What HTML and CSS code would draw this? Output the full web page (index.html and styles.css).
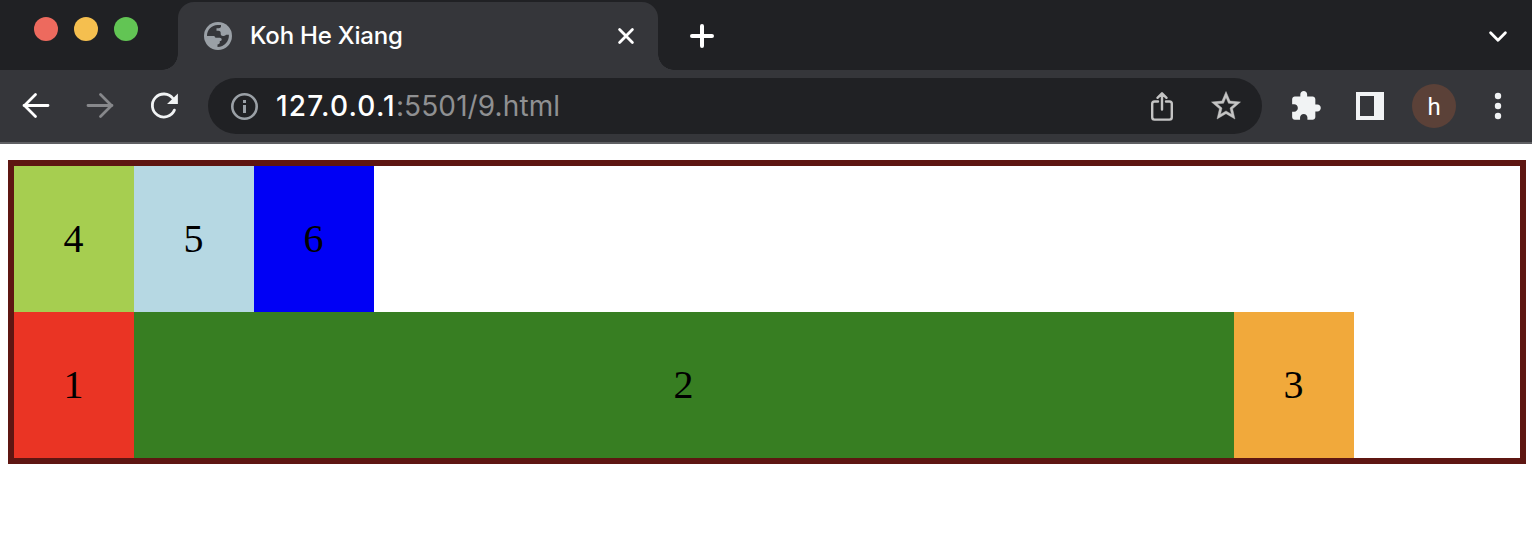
FILE: index.html
```html
<!DOCTYPE html>
<html lang="en">
<head>
<meta charset="utf-8">
<title>Koh He Xiang</title>
<link rel="stylesheet" href="styles.css">
</head>
<body>
<header class="browser">
  <div class="tab-strip">
    <div class="lights">
      <span class="light close"></span>
      <span class="light minimise"></span>
      <span class="light expand"></span>
    </div>
    <div class="tab">
      <svg class="globe" viewBox="0 0 28 28"><circle cx="14" cy="14" r="14" fill="#9aa0a6"/><path fill="#35363a" d="M3 14C3 7.700 7.600 3.200 13.500 3h3.500v1.200c0 1.200-1 2-2.200 2h-2.300v2.600h1.900c1.300 0 2.300.8 2.300 2v1.200c0 1.200 1 2 2.200 2h.8c1.200 0 2-.8 2.600-1.200h2.600c.3 6.600-4.400 12-11.400 12.200v-2.600c1.300 0 2.300-.6 2.300-1.800v-1.500c1 0 1.900-.6 1.900-1.600s-.9-1.700-2-1.700h-3.200c-1.200 0-2-.6-2-1.800z"/></svg>
      <span class="tab-title">Koh He Xiang</span>
      <svg class="tab-close" viewBox="0 0 20 20"><path d="M3.600 3.600l12.800 12.800M16.400 3.600L3.600 16.400" class="line white"/></svg>
    </div>
    <svg class="new-tab" viewBox="0 0 24 24"><path d="M12 2v20M2 12h20" class="line white thick"/></svg>
    <svg class="tab-search" viewBox="0 0 24 24"><path d="M4.600 8.800L12 16.300l7.400-7.500" class="line white"/></svg>
  </div>
  <div class="toolbar">
    <span class="button"><svg class="icon" viewBox="0 0 48 48"><path d="M36 23.500H12M23.500 12.500L12.500 23.500 23.500 34.500" class="line white"/></svg></span>
    <span class="button"><svg class="icon" viewBox="0 0 48 48"><path d="M12 23.500h24M24.500 12.500L35.500 23.500 24.500 34.500" class="line dim"/></svg></span>
    <span class="button"><svg class="icon" viewBox="0 0 48 48"><path d="M34.400 28.100A11.500 11.500 0 1 1 33 16.500" class="line pale"/><path d="M37.900 11.500V22H27.100z" fill="#f1f3f4"/></svg></span>
    <div class="omnibox">
      <svg class="icon" viewBox="0 0 48 48"><circle cx="24.500" cy="24.500" r="12.200" fill="none" stroke="#9aa0a6" stroke-width="2.600"/><path fill="#9aa0a6" d="M23 18h3v3h-3zM23 23h3v8h-3z"/></svg>
      <span class="url"><span class="host">127.0.0.1</span>:5501/9.html</span>
      <svg class="icon share" viewBox="0 0 48 48"><path d="M20 19.500h-3.500q-2.300 0-2.300 2.300v13.500q0 2.300 2.300 2.300h15q2.300 0 2.300-2.300v-13.500q0-2.300-2.300-2.300h-3.500M24 27.500V12M19.500 15.800l4.500-4.500 4.500 4.500" class="line grey"/></svg>
      <svg class="icon star" viewBox="0 0 48 48"><path transform="translate(6.600 6.600) scale(1.450)" fill="#c4c4c4" stroke="#c4c4c4" stroke-width=".3" d="M22 9.240l-7.190-.62L12 2 9.190 8.630 2 9.240l5.460 4.730L5.820 21 12 17.270 18.180 21l-1.630-7.030L22 9.240zM12 15.400l-3.760 2.270 1-4.280-3.320-2.880 4.380-.38L12 6.100l1.710 4.040 4.380.38-3.320 2.880 1 4.280L12 15.400z"/></svg>
    </div>
    <span class="button"><svg class="icon" viewBox="0 0 48 48"><path transform="translate(7.400 7.600) scale(1.365)" fill="#f1f3f4" d="M20.500 11H19V7c0-1.100-.9-2-2-2h-4V3.500C13 2.120 11.880 1 10.500 1S8 2.120 8 3.500V5H4c-1.100 0-1.990.9-1.990 2v3.800H3.500c1.490 0 2.700 1.210 2.700 2.700s-1.210 2.700-2.700 2.700H2V20c0 1.100.9 2 2 2h3.800v-1.500c0-1.490 1.210-2.700 2.700-2.700s2.700 1.210 2.700 2.700V22H17c1.100 0 2-.9 2-2v-4h1.500c1.380 0 2.500-1.120 2.500-2.500S21.880 11 20.500 11z"/></svg></span>
    <span class="button"><svg class="icon" viewBox="0 0 48 48"><path fill="#f1f3f4" fill-rule="evenodd" d="M10 10h28v28H10zM14 14v20h14V14z"/></svg></span>
    <span class="button"><span class="avatar">h</span></span>
    <span class="button"><svg class="icon" viewBox="0 0 48 48"><g fill="#f1f3f4"><circle cx="24" cy="14" r="3.200"/><circle cx="24" cy="24" r="3.200"/><circle cx="24" cy="34" r="3.200"/></g></svg></span>
  </div>
</header>
<main class="container">
  <div class="row">
    <div class="box lime">4</div>
    <div class="box sky">5</div>
    <div class="box blue">6</div>
  </div>
  <div class="row">
    <div class="box red">1</div>
    <div class="box green">2</div>
    <div class="box orange">3</div>
  </div>
</main>
</body>
</html>
```
FILE: styles.css
```css
* { box-sizing: border-box; }
body { margin: 0; background: #fff; overflow: hidden; }
svg { display: block; flex: none; }

.browser { font-family: Inter, "Liberation Sans", sans-serif; color: #fff; }

.tab-strip { display: flex; align-items: center; height: 70px; background: #202124; }
.lights { display: flex; gap: 16px; width: 178px; height: 70px; padding: 17px 0 0 34px; }
.light { width: 24px; height: 24px; border-radius: 50%; }
.close { background: #ed6a5e; }
.minimise { background: #f5bf4f; }
.expand { background: #62c554; }

.tab { position: relative; display: flex; align-items: center; width: 480px; height: 68px; margin-top: 2px; padding: 0 22px 0 26px; background: #35363a; border-radius: 16px 16px 0 0; }
/* concave feet joining the tab to the toolbar */
.tab::before, .tab::after { content: ""; position: absolute; bottom: 0; width: 16px; height: 16px; }
.tab::before { left: -16px; background: radial-gradient(circle at 0 0, transparent 15.5px, #35363a 16px); }
.tab::after { right: -16px; background: radial-gradient(circle at 100% 0, transparent 15.5px, #35363a 16px); }
.globe { width: 28px; height: 28px; }
.tab-title { margin-left: 18px; font-size: 24px; font-weight: 450; line-height: 28px; letter-spacing: -0.2px; white-space: nowrap; }
.tab-close { width: 20px; height: 20px; margin-left: auto; }
.new-tab { width: 24px; height: 24px; margin: 2px 0 0 32px; }
.tab-search { width: 24px; height: 24px; margin: 2px 22px 0 auto; }

.toolbar { display: flex; align-items: center; height: 74px; padding-left: 4px; background: #35363a; border-bottom: 2px solid #5f6063; }
.button { display: flex; flex: none; align-items: center; justify-content: center; width: 64px; height: 64px; }
.icon { width: 48px; height: 48px; }
.omnibox { display: flex; flex: none; align-items: center; width: 1054px; height: 56px; margin: 0 12px; padding: 0 12px; background: #202124; border-radius: 28px; }
.url { margin-left: 8px; color: #8f9092; font-size: 28px; line-height: 36px; letter-spacing: 0.1px; white-space: nowrap; }
.host { color: #fff; font-weight: 450; letter-spacing: 1.2px; }
.share { margin-left: auto; }
.star { margin-left: 16px; }
.avatar { display: flex; align-items: center; justify-content: center; width: 44px; height: 44px; padding-top: 2px; border-radius: 50%; background: #5b4138; font: 24px/28px Roboto, sans-serif; }

.line { fill: none; stroke-width: 2.8; stroke-linecap: round; stroke-linejoin: round; }
.thick { stroke-width: 4; }
.white { stroke: #fff; }
.pale { stroke: #f1f3f4; }
.dim { stroke: #87888b; }
.grey { stroke: #c4c4c4; stroke-width: 2.4; }

.container { width: 1518px; margin: 16px 0 0 8px; border: 6px solid #5e1612; font: 40px/46px "Liberation Serif", "Times New Roman", serif; color: #000; }
.row { display: flex; }
.box { width: 120px; padding: 50px 1px 50px 0; text-align: center; }
.lime { background: #a6ce50; }
.sky { background: #b6d8e3; }
.blue { background: #0000f5; }
.red { background: #ea3424; }
.green { width: 1100px; background: #377e22; }
.orange { background: #f1a93b; }
```
